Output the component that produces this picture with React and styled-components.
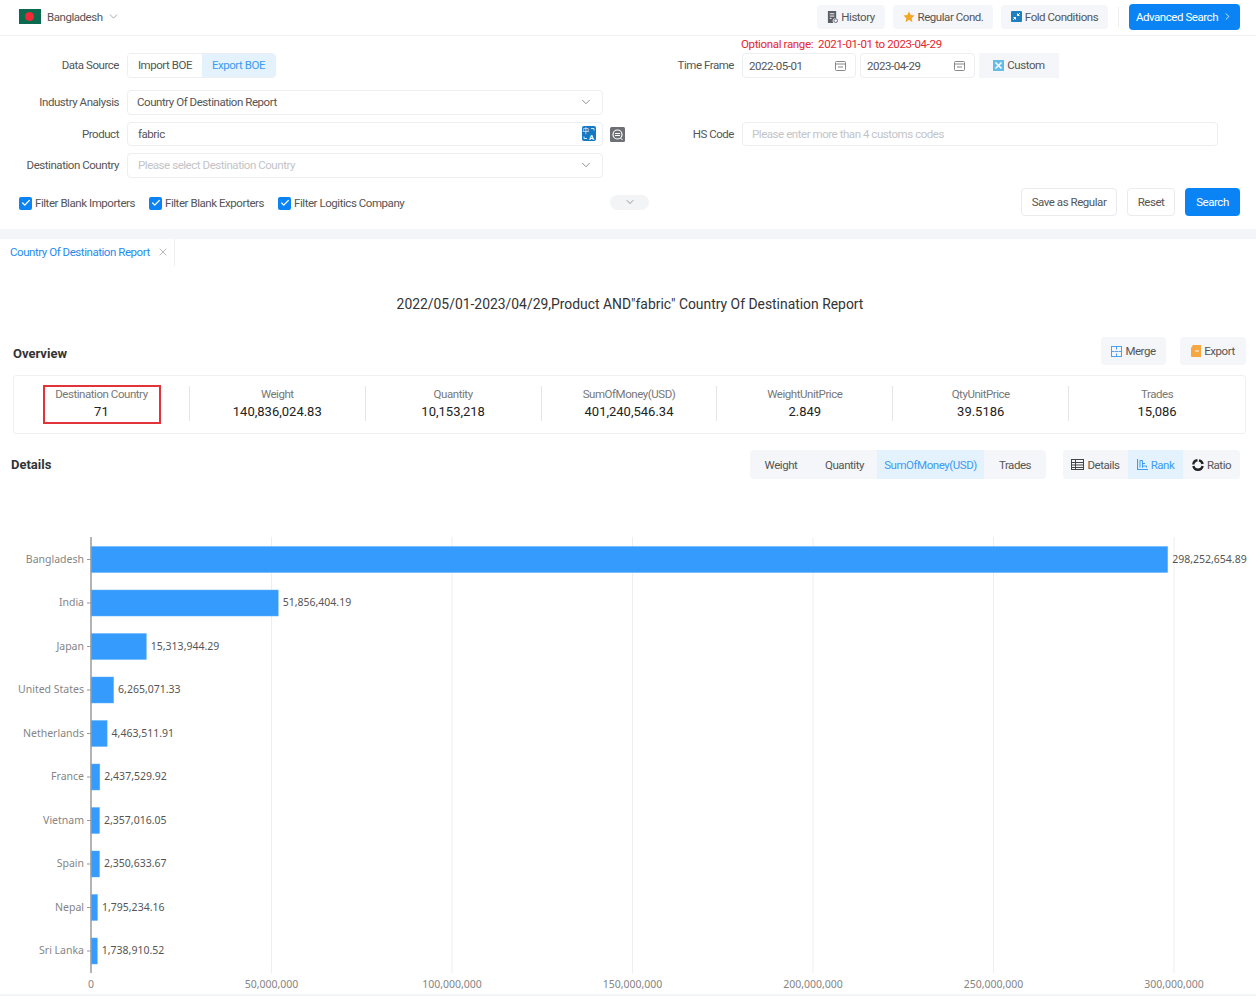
import React from "react";
import styled, { createGlobalStyle } from "styled-components";
import { ChevronDown, ChevronRight, Check, X } from "lucide-react";

const GlobalStyle = createGlobalStyle`
  html, body { margin: 0; padding: 0; background: #fff; }
  body { font-family: Roboto, "Liberation Sans", sans-serif; font-size: 11.5px; letter-spacing: -0.45px; color: #444; }
  * { box-sizing: border-box; }
`;

const Page = styled.div`
  width: 1256px;
  height: 996px;
  overflow: hidden;
  background: #fff;
`;

const TopBar = styled.header`
  height: 36px;
  display: flex;
  align-items: center;
  padding: 0 16px 2px 19px;
  border-bottom: 1px solid #f1f1f1;
`;
const CountryPick = styled.div`
  display: flex;
  align-items: center;
  color: #555;
  margin-right: auto;
  svg.chev { margin-left: 4px; color: #777; }
`;
const Flag = styled.span`
  width: 22px;
  height: 15px;
  margin-right: 6px;
  background: #0b6a4f;
  display: flex;
  align-items: center;
  justify-content: center;
  &::after {
    content: "";
    width: 9px;
    height: 9px;
    margin-left: -2px;
    border-radius: 50%;
    background: #ee2a35;
  }
`;
const GhostButton = styled.button`
  height: 24px;
  width: ${(p) => p.$w}px;
  margin-right: ${(p) => p.$mr || 8}px;
  border: 0;
  border-radius: 4px;
  background: #f4f6f9;
  color: #555;
  font: inherit;
  letter-spacing: inherit;
  display: flex;
  align-items: center;
  justify-content: center;
  gap: 3px;
  padding: 0;
`;
const VLine = styled.span`
  width: 1px;
  height: 20px;
  background: #eee;
  margin: 0 10px 0 2px;
`;
const PrimaryButton = styled.button`
  height: ${(p) => p.$h}px;
  width: ${(p) => p.$w}px;
  border: 0;
  border-radius: 4px;
  background: #0a84f5;
  color: #fff;
  font: inherit;
  letter-spacing: inherit;
  display: flex;
  align-items: center;
  justify-content: center;
  gap: 4px;
  padding: 0;
`;

const OptionalRange = styled.div`
  height: 17px;
  padding-left: 741px;
  line-height: 17px;
  letter-spacing: -0.35px;
  color: #e8242c;
`;
const FormGrid = styled.div`
  display: grid;
  grid-template-columns: 119px 476px 123px 476px;
  grid-template-rows: 30px 25px 24px 25px;
  column-gap: 8px;
  row-gap: 7px;
`;
const Label = styled.label`
  line-height: 25px;
  text-align: right;
  color: #555;
  white-space: nowrap;
`;
const Segment = styled.div`
  display: flex;
  width: 149px;
  height: 25px;
  border: 1px solid #eceef1;
  border-radius: 4px;
  overflow: hidden;
`;
const SegmentItem = styled.span`
  flex: ${(p) => p.$grow};
  display: flex;
  align-items: center;
  justify-content: center;
  padding-bottom: 1px;
  color: ${(p) => (p.$active ? "#3d9bf2" : "#555")};
  background: ${(p) => (p.$active ? "#e3f2fc" : "#fff")};
`;
const Field = styled.div`
  position: relative;
  height: ${(p) => p.$h || 25}px;
  border: 1px solid #eceef1;
  border-radius: 4px;
  display: flex;
  align-items: center;
  justify-content: space-between;
  padding: 0 ${(p) => p.$pr || 9}px 1px ${(p) => p.$pl || 9}px;
  color: ${(p) => (p.$muted ? "#c2c4c8" : "#555")};
  svg.chev { color: #666; }
`;
const FieldIconOutside = styled.span`
  position: absolute;
  right: -23px;
  top: 4px;
  display: flex;
`;
const DateRow = styled.div`
  display: flex;
  gap: 4px;
`;
const DateField = styled(Field)`
  width: ${(p) => p.$w}px;
  padding: 0 9px 0 6px;
`;
const CustomButton = styled(GhostButton)`
  height: 25px;
  border-radius: 0;
  margin: 0;
  padding-bottom: 1px;
`;

const OptionsRow = styled.div`
  display: grid;
  grid-template-columns: 1fr 39px 1fr;
  align-items: center;
  padding: 0 16px 0 19px;
  height: 48px;
`;
const Checks = styled.div`
  display: flex;
  align-items: center;
  gap: 14px;
  margin-top: 2px;
`;
const CheckItem = styled.span`
  display: flex;
  align-items: center;
  gap: 3px;
  color: #555;
  white-space: nowrap;
`;
const CheckBox = styled.span`
  width: 13px;
  height: 13px;
  border-radius: 2px;
  background: #0a84f5;
  color: #fff;
  display: flex;
  align-items: center;
  justify-content: center;
`;
const FoldPill = styled.span`
  height: 15px;
  border-radius: 8px;
  background: #f3f4f6;
  display: flex;
  align-items: center;
  justify-content: center;
  color: #666;
`;
const FormActions = styled.div`
  display: flex;
  justify-content: flex-end;
  gap: 10px;
`;
const OutlineButton = styled.button`
  height: 28px;
  width: ${(p) => p.$w}px;
  border: 1px solid #e9ebee;
  border-radius: 4px;
  background: #fff;
  color: #555;
  font: inherit;
  letter-spacing: inherit;
  padding: 0;
`;

const Band = styled.div`
  height: 10px;
  margin-top: 3px;
  background: #f3f5f9;
`;
const TabStrip = styled.div`
  height: 27px;
  display: flex;
`;
const Tab = styled.div`
  width: 175px;
  display: flex;
  align-items: center;
  padding: 0 0 2px 10px;
  gap: 7px;
  color: #1f8cf0;
  white-space: nowrap;
  border-right: 1px solid #eee;
  svg { color: #888; }
`;
const ReportTitle = styled.h1`
  margin: 24px 0 0;
  padding-left: 4px;
  height: 28px;
  line-height: 28px;
  text-align: center;
  font-size: 13.9px;
  letter-spacing: 0;
  font-weight: 400;
  color: #333;
`;
const OverviewHead = styled.div`
  height: 30px;
  margin-top: 18px;
  padding: 0 10px 0 13px;
  display: flex;
  align-items: center;
  justify-content: space-between;
`;
const SectionTitle = styled.h2`
  margin: ${(p) => p.$mt || 0}px 0 0;
  font-size: 13px;
  letter-spacing: 0;
  font-weight: 700;
  color: #333;
`;
const HeadActions = styled.div`
  display: flex;
  gap: 14px;
  button { margin: 0; height: 28px; }
`;
const StatCard = styled.div`
  margin: 9px 10px 0 13px;
  height: 59px;
  border: 1px solid #eef0f2;
  border-radius: 3px;
  display: grid;
  grid-template-columns: repeat(7, 1fr);
  align-items: center;
`;
const Stat = styled.div`
  position: relative;
  height: 35px;
  margin-bottom: 2px;
  padding-top: 1px;
  display: flex;
  flex-direction: column;
  align-items: center;
  justify-content: space-between;
  border-right: ${(p) => (p.$last ? "0" : "1px solid #e4e5e7")};
  ${(p) => p.$marked && `
    &::after {
      content: "";
      box-sizing: border-box;
      position: absolute;
      left: 29px;
      top: -1px;
      width: 118px;
      height: 39px;
      border: 2px solid #e2333a;
    }
  `}
`;
const StatLabel = styled.span`
  color: #777;
  line-height: 15px;
`;
const StatValue = styled.span`
  color: #222;
  font-size: 13px;
  letter-spacing: 0;
  line-height: 18px;
`;
const DetailsHead = styled.div`
  margin-top: 16px;
  height: 29px;
  padding: 0 16px 0 11px;
  display: flex;
  align-items: center;
`;
const DetailsSwitches = styled.div`
  margin-left: auto;
  display: flex;
  gap: 17px;
`;
const Switch = styled.div`
  height: 29px;
  display: flex;
  background: #f4f6f9;
  border-radius: 4px;
  overflow: hidden;
`;
const SwitchItem = styled.span`
  width: ${(p) => p.$w}px;
  display: flex;
  align-items: center;
  justify-content: center;
  gap: 3px;
  color: ${(p) => (p.$active ? "#3d9bf2" : "#555")};
  background: ${(p) => (p.$active ? "#e3f2fc" : "transparent")};
`;
const Chart = styled.svg`
  display: block;
  margin-top: 11px;
  font-family: "Noto Sans", "Liberation Sans", sans-serif;
  font-size: 10.5px;
  letter-spacing: 0;
`;
const BottomBand = styled.div`
  height: 2px;
  background: #f3f5f9;
`;

const Doc = () => (
  <svg width="11" height="12" viewBox="0 0 12 13">
    <path d="M1 0h9v8a3 3 0 0 0-3 5H1z" fill="#5c6066" />
    <path d="M3 3h5M3 5.500h5M3 8h2" stroke="#fff" strokeWidth="1" />
    <circle cx="9.500" cy="10.500" r="2" fill="none" stroke="#5c6066" />
  </svg>
);
const Star = () => (
  <svg width="12" height="12" viewBox="0 0 24 24">
    <path d="M12 1l3.400 7.200 7.600 1-5.600 5.400 1.400 7.800L12 17.600 5.200 22.400l1.400-7.800L1 9.200l7.600-1z" fill="#f5a623" />
  </svg>
);
const FoldIcon = () => (
  <svg width="11" height="11" viewBox="0 0 11 11">
    <rect width="11" height="11" rx="1" fill="#1d7fc0" />
    <path d="M9 2L6.500 4.500M6.500 2.500v2h2M2 9l2.500-2.500M2.500 6.500h2v2" stroke="#fff" fill="none" />
  </svg>
);
const CustomIcon = () => (
  <svg width="11" height="11" viewBox="0 0 11 11">
    <rect width="11" height="11" fill="#63bde6" />
    <path d="M2.500 2.500l6 6M8.500 2.500l-6 6" stroke="#fff" strokeWidth="1.500" />
  </svg>
);
const CalendarIcon = () => (
  <svg width="11" height="10" viewBox="0 0 11 10" fill="none" stroke="#888">
    <rect x="0.500" y="0.500" width="10" height="9" rx="1" />
    <path d="M0.500 3h10M3 6h5" />
  </svg>
);
const TranslateIcon = () => (
  <svg width="14" height="15" viewBox="0 0 14 15">
    <rect width="14" height="15" rx="2" fill="#1379c4" />
    <text x="0.500" y="7" fontSize="6.500" fill="#fff" fontFamily="Noto Sans CJK SC" letterSpacing="0">中</text>
    <text x="7" y="13.500" fontSize="7.500" fontWeight="700" fill="#fff" letterSpacing="0">A</text>
    <path d="M9 2.500h3v2M5 12.500H2v-2" fill="none" stroke="#fff" strokeWidth="0.800" />
  </svg>
);
const LensIcon = () => (
  <svg width="15" height="15" viewBox="0 0 15 15">
    <rect width="15" height="15" rx="1.500" fill="#6c6f73" />
    <circle cx="7.500" cy="7.500" r="4.500" fill="none" stroke="#fff" strokeWidth="1.200" />
    <path d="M5 6.500h5M5 8.500h5M10.500 11l2 2" stroke="#fff" />
  </svg>
);
const MergeIcon = () => (
  <svg width="11" height="11" viewBox="0 0 11 11" fill="none" stroke="#4aa3ee">
    <rect x="0.500" y="0.500" width="10" height="10" />
    <path d="M0.500 5.500h3M7.500 5.500h3M5.500 0.500v3M5.500 7.500v3M4 5.500h3" />
  </svg>
);
const ExportIcon = () => (
  <svg width="10" height="12" viewBox="0 0 10 12">
    <path d="M2 0h8v12H1a1 1 0 0 1-1-1V3z" fill="#f5a742" />
    <path d="M4 6h4" stroke="#fff" />
  </svg>
);
const TableIcon = () => (
  <svg width="13" height="11" viewBox="0 0 13 11" fill="none" stroke="#444">
    <rect x="0.500" y="0.500" width="12" height="10" />
    <path d="M0.500 3.500h12M0.500 6h12M0.500 8.500h12M4.500 0.500v10" />
  </svg>
);
const RankIcon = () => (
  <svg width="11" height="11" viewBox="0 0 11 11" fill="none" stroke="#3d9bf2">
    <path d="M0.500 0v10.500H11" strokeWidth="1.200" />
    <path d="M3 8.500V1.500h2.500v7M5.500 8.500V4.500H8M5.500 7h4v1.500" />
  </svg>
);
const RatioIcon = () => (
  <svg width="12" height="12" viewBox="0 0 12 12" fill="none" stroke="#222" strokeWidth="2.400">
    <path d="M5.500 1.300A4.700 4.700 0 0 0 1.300 5.500" />
    <path d="M1.400 7A4.700 4.700 0 0 0 10.600 7" />
    <path d="M7 1.400A4.700 4.700 0 0 1 10.600 5" />
  </svg>
);

const stats = [
  ["Destination Country", "71"],
  ["Weight", "140,836,024.83"],
  ["Quantity", "10,153,218"],
  ["SumOfMoney(USD)", "401,240,546.34"],
  ["WeightUnitPrice", "2.849"],
  ["QtyUnitPrice", "39.5186"],
  ["Trades", "15,086"],
];

const rows = [
  ["Bangladesh", 298252654.89],
  ["India", 51856404.19],
  ["Japan", 15313944.29],
  ["United States", 6265071.33],
  ["Netherlands", 4463511.91],
  ["France", 2437529.92],
  ["Vietnam", 2357016.05],
  ["Spain", 2350633.67],
  ["Nepal", 1795234.16],
  ["Sri Lanka", 1738910.52],
];

const ticks = [0, 50000000, 100000000, 150000000, 200000000, 250000000, 300000000];
const axisX = 91;
const pxPerUnit = 1083 / 300000000;
const money = (n) => n.toLocaleString("en-US", { minimumFractionDigits: 2 });

function RankChart() {
  return (
    <Chart width="1256" height="504" viewBox="0 490 1256 504">
      {ticks.slice(1).map((t) => (
        <line key={t} x1={axisX + t * pxPerUnit} x2={axisX + t * pxPerUnit} y1="537" y2="973" stroke="#eeeeee" />
      ))}
      {rows.map(([name, value], i) => {
        const cy = 559.5 + i * 43.5;
        const w = value * pxPerUnit;
        return (
          <g key={name}>
            <rect x={axisX} y={cy - 13} width={w} height="26" fill="#359bfd" stroke="#62b0fd" strokeWidth="0.5" />
            <line x1="87" x2={axisX} y1={cy} y2={cy} stroke="#999" />
            <text x="84" y={cy + 3} textAnchor="end" fill="#858585">{name}</text>
            <text x={axisX + w + 4.500} y={cy + 3} fill="#555">{money(value)}</text>
          </g>
        );
      })}
      <line x1={axisX} x2={axisX} y1="537" y2="973" stroke="#9a9a9a" strokeWidth="1.500" />
      {ticks.map((t) => (
        <text key={t} x={axisX + t * pxPerUnit} y="988" textAnchor="middle" fill="#858585">
          {t.toLocaleString("en-US")}
        </text>
      ))}
    </Chart>
  );
}

export default function App() {
  return (
    <Page>
      <GlobalStyle />
      <TopBar>
        <CountryPick>
          <Flag />
          Bangladesh
          <ChevronDown className="chev" size={13} strokeWidth={1.2} />
        </CountryPick>
        <GhostButton $w={68}><Doc /> History</GhostButton>
        <GhostButton $w={100}><Star /> Regular Cond.</GhostButton>
        <GhostButton $w={107}><FoldIcon /> Fold Conditions</GhostButton>
        <VLine />
        <PrimaryButton $w={111} $h={26}>Advanced Search <ChevronRight size={11} strokeWidth={1.8} /></PrimaryButton>
      </TopBar>

      <OptionalRange>Optional range:&nbsp; 2021-01-01 to 2023-04-29</OptionalRange>
      <FormGrid>
        <Label>Data Source</Label>
        <Segment>
          <SegmentItem $grow={75}>Import BOE</SegmentItem>
          <SegmentItem $grow={74} $active>Export BOE</SegmentItem>
        </Segment>
        <Label>Time Frame</Label>
        <DateRow>
          <DateField $w={114}>2022-05-01 <CalendarIcon /></DateField>
          <DateField $w={115}>2023-04-29 <CalendarIcon /></DateField>
          <CustomButton $w={80}><CustomIcon /> Custom</CustomButton>
        </DateRow>

        <Label>Industry Analysis</Label>
        <Field>
          Country Of Destination Report
          <ChevronDown className="chev" size={14} strokeWidth={1.2} />
        </Field>
        <span />
        <span />

        <Label>Product</Label>
        <Field $h={24} $pl={10} $pr={6}>
          fabric
          <TranslateIcon />
          <FieldIconOutside><LensIcon /></FieldIconOutside>
        </Field>
        <Label>HS Code</Label>
        <Field $h={24} $muted>Please enter more than 4 customs codes</Field>

        <Label>Destination Country</Label>
        <Field $muted $pl={10}>
          Please select Destination Country
          <ChevronDown className="chev" size={14} strokeWidth={1.2} />
        </Field>
      </FormGrid>

      <OptionsRow>
        <Checks>
          <CheckItem><CheckBox><Check size={10} strokeWidth={3} /></CheckBox>Filter Blank Importers</CheckItem>
          <CheckItem><CheckBox><Check size={10} strokeWidth={3} /></CheckBox>Filter Blank Exporters</CheckItem>
          <CheckItem><CheckBox><Check size={10} strokeWidth={3} /></CheckBox>Filter Logitics Company</CheckItem>
        </Checks>
        <FoldPill><ChevronDown size={12} strokeWidth={1.3} /></FoldPill>
        <FormActions>
          <OutlineButton $w={96}>Save as Regular</OutlineButton>
          <OutlineButton $w={48}>Reset</OutlineButton>
          <PrimaryButton $w={55} $h={28}>Search</PrimaryButton>
        </FormActions>
      </OptionsRow>

      <Band />
      <TabStrip>
        <Tab>Country Of Destination Report <X size={12} strokeWidth={1.2} /></Tab>
      </TabStrip>

      <ReportTitle>2022/05/01-2023/04/29,Product AND"fabric" Country Of Destination Report</ReportTitle>

      <OverviewHead>
        <SectionTitle $mt={4}>Overview</SectionTitle>
        <HeadActions>
          <GhostButton $w={65}><MergeIcon /> Merge</GhostButton>
          <GhostButton $w={66}><ExportIcon /> Export</GhostButton>
        </HeadActions>
      </OverviewHead>
      <StatCard>
        {stats.map(([label, value], i) => (
          <Stat key={label} $marked={i === 0} $last={i === stats.length - 1}>
            <StatLabel>{label}</StatLabel>
            <StatValue>{value}</StatValue>
          </Stat>
        ))}
      </StatCard>

      <DetailsHead>
        <SectionTitle>Details</SectionTitle>
        <DetailsSwitches>
          <Switch>
            <SwitchItem $w={62}>Weight</SwitchItem>
            <SwitchItem $w={65}>Quantity</SwitchItem>
            <SwitchItem $w={107} $active>SumOfMoney(USD)</SwitchItem>
            <SwitchItem $w={62}>Trades</SwitchItem>
          </Switch>
          <Switch>
            <SwitchItem $w={65}><TableIcon /> Details</SwitchItem>
            <SwitchItem $w={55} $active><RankIcon /> Rank</SwitchItem>
            <SwitchItem $w={57}><RatioIcon /> Ratio</SwitchItem>
          </Switch>
        </DetailsSwitches>
      </DetailsHead>

      <RankChart />
      <BottomBand />
    </Page>
  );
}
